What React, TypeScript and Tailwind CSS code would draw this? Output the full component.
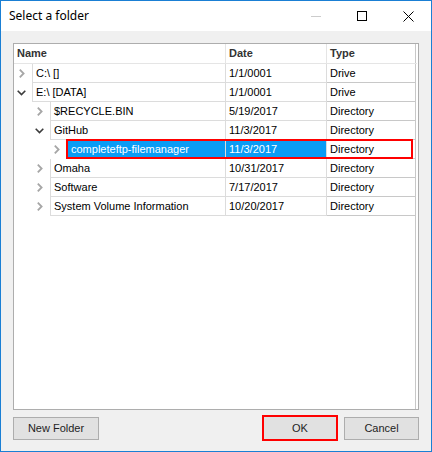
import React from "react";

type Row = {
  name: string;
  level: number;
  expanded?: boolean;
  date: string;
  type: string;
  selected?: boolean;
};

const rows: Row[] = [
  { name: "C:\\ []", level: 0, date: "1/1/0001", type: "Drive" },
  { name: "E:\\ [DATA]", level: 0, expanded: true, date: "1/1/0001", type: "Drive" },
  { name: "$RECYCLE.BIN", level: 1, date: "5/19/2017", type: "Directory" },
  { name: "GitHub", level: 1, expanded: true, date: "11/3/2017", type: "Directory" },
  { name: "completeftp-filemanager", level: 2, date: "11/3/2017", type: "Directory", selected: true },
  { name: "Omaha", level: 1, date: "10/31/2017", type: "Directory" },
  { name: "Software", level: 1, date: "7/17/2017", type: "Directory" },
  { name: "System Volume Information", level: 1, date: "10/20/2017", type: "Directory" },
];

const indentClass = ["w-[18px]", "w-[36px]", "w-[53px]"];
const nameWidth = ["w-[194px]", "w-[176px]", "w-[159px]"];

function Chevron({ expanded }: { expanded?: boolean }) {
  if (expanded) {
    return (
      <svg width="9" height="6" viewBox="0 0 9 6" className="block">
        <path d="M0.7 0.7 L4.5 4.5 L8.3 0.7" fill="none" stroke="#3c3c3c" strokeWidth="1.6" />
      </svg>
    );
  }
  return (
    <svg width="6" height="9" viewBox="0 0 6 9" className="block">
      <path d="M0.8 0.7 L4.6 4.5 L0.8 8.3" fill="none" stroke="#a6a6a6" strokeWidth="1.8" />
    </svg>
  );
}

export default function App() {
  return (
    <div
      className="w-[432px] h-[452px] border border-[#1a7fd4] bg-[#f0f0f0] flex flex-col text-[11px] text-black"
      style={{ fontFamily: '"Liberation Sans", Arial, sans-serif' }}
    >
      {/* title bar */}
      <div className="h-[30px] bg-white flex items-center shrink-0">
        <div
          className="pl-[8px] flex-1 text-[12px] text-black leading-none pb-[1px]"
          style={{ fontFamily: '"Noto Sans", sans-serif' }}
        >
          Select a folder
        </div>
        <div className="flex items-center h-full">
          <div className="w-[46px] h-full flex items-center justify-center">
            <div className="w-[10px] h-[1px] bg-[#cccccc]" />
          </div>
          <div className="w-[46px] h-full flex items-center justify-center">
            <div className="w-[10px] h-[10px] border border-black" />
          </div>
          <div className="w-[46px] h-full flex items-center justify-center">
            <svg width="11" height="11" viewBox="0 0 11 11">
              <path d="M0.5 0.5 L10.5 10.5 M10.5 0.5 L0.5 10.5" stroke="#000" strokeWidth="1" />
            </svg>
          </div>
        </div>
      </div>

      {/* body */}
      <div className="flex-1 flex flex-col pl-[12px] pr-[12px] pt-[12px] pb-[11px]">
        {/* list view */}
        <div className="h-[367px] border border-[#adadad] bg-white flex flex-col pr-[1px]">
          {/* header */}
          <div className="flex h-[20px] border-b border-[#e5e5e5] font-bold text-[#333333] shrink-0">
            <div className="w-[212px] border-r border-[#e5e5e5] pl-[3px] flex items-center">Name</div>
            <div className="w-[101px] border-r border-[#e5e5e5] pl-[3px] flex items-center">Date</div>
            <div className="w-[89px] pl-[3px] flex items-center border-r border-[#c8c8c8]">Type</div>
          </div>
          {rows.map((r, i) => (
            <div key={i} className="flex h-[19px] relative">
              <div className={`${indentClass[r.level]} flex items-center justify-end pr-[6px] shrink-0`}>
                <div className="w-[9px] flex justify-center">
                  <Chevron expanded={r.expanded} />
                </div>
              </div>
              <div
                className={`${nameWidth[r.level]} shrink-0 border-l border-b border-r border-[#dcdcdc] pl-[3px] flex items-center whitespace-nowrap ${
                  r.selected ? "bg-[#0a9cf5] text-white" : ""
                }`}
              >
                {r.name}
              </div>
              <div
                className={`w-[101px] shrink-0 border-b border-r border-[#dcdcdc] pl-[3px] flex items-center ${
                  r.selected ? "bg-[#0a9cf5] text-white" : ""
                }`}
              >
                {r.date}
              </div>
              <div className="w-[89px] shrink-0 border-b border-r border-[#c8c8c8] pl-[3px] flex items-center">
                {r.type}
              </div>
              {r.selected && (
                <div className="absolute left-[52px] top-[-1px] w-[347px] h-[20px] border-2 border-[#ff0000] pointer-events-none" />
              )}
            </div>
          ))}
          <div className="flex-1 flex">
            <div className="w-[402px] border-r border-[#c8c8c8]" />
          </div>
        </div>

        {/* buttons */}
        <div className="flex items-end mt-[5px]">
          <div className="w-[86px] h-[23px] border border-[#adadad] bg-[#e1e1e1] flex items-center justify-center text-[#1e1e1e]">
            New Folder
          </div>
          <div className="flex-1" />
          <div className="w-[76px] h-[26px] border-2 border-[#ff0000] bg-[#e1e1e1] flex items-center justify-center text-[#1e1e1e] mb-[-1px]">
            OK
          </div>
          <div className="w-[75px] h-[23px] ml-[6px] border border-[#adadad] bg-[#e1e1e1] flex items-center justify-center text-[#1e1e1e]">
            Cancel
          </div>
        </div>
      </div>
    </div>
  );
}
